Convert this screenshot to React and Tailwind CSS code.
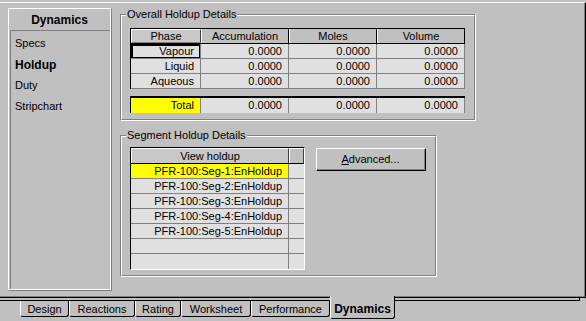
const BG = "bg-[#c0c0c0]";

function GroupBox({ label, className, children }) {
  return (
    <div className={`relative border-t border-l border-t-[#808080] border-l-[#808080] border-r border-b border-r-white border-b-white ${className}`}>
      <div className="h-full border-t border-l border-t-white border-l-white border-r border-b border-r-[#808080] border-b-[#808080]">
        {children}
      </div>
      <div className="absolute -top-[7px] left-[5px] px-[1px] bg-[#c0c0c0] leading-[13px]">{label}</div>
    </div>
  );
}

function Cell({ w, children, className = "" }) {
  return (
    <div className={`h-full flex items-center justify-end pr-[6px] border-r border-r-[#808080] bg-[#e0e0e0] ${w} ${className}`}>
      {children}
    </div>
  );
}

const phases = ["Vapour", "Liquid", "Aqueous"];
const segs = [1, 2, 3, 4, 5];

export default function App() {
  return (
    <div className={`w-[586px] h-[321px] ${BG} font-['Liberation_Sans',Arial,sans-serif] text-[11px] text-black overflow-hidden leading-none`}>
      <div className="pt-[2px]">
        <div className="h-[296px] border-t border-t-white border-r border-b border-r-black border-b-black">
          <div className="h-full border-r border-b border-r-[#808080] border-b-[#808080] flex items-start">
            {/* Left nav */}
            <div className="ml-[8px] mt-[5px] w-[104px] h-[283px] border-t border-l border-t-white border-l-white border-r border-b border-r-[#808080] border-b-[#808080]">
              <div className="h-full flex flex-col border-r border-b border-r-white border-b-white">
                <div className="h-[21px] flex items-center justify-center font-bold text-[12px]">Dynamics</div>
                <div className="flex-1 ml-[1px] border-t border-l border-t-[#808080] border-l-[#808080] pt-[2px] pl-[4px]">
                  <div className="h-[21px] flex items-center">Specs</div>
                  <div className="h-[21px] flex items-center font-bold text-[12px]">Holdup</div>
                  <div className="h-[21px] flex items-center">Duty</div>
                  <div className="h-[21px] flex items-center">Stripchart</div>
                </div>
              </div>
            </div>

            {/* Right content */}
            <div className="ml-[8px] mt-[11px] flex flex-col">
              <GroupBox label="Overall Holdup Details" className="w-[356px] h-[107px]">
                <div className="pt-[12px] pl-[8px]">
                  <div className="w-[335px] border-t border-l border-black">
                    <div className="h-[15px] flex border-b border-b-black">
                      <div className="w-[70px] h-full flex items-center justify-center border-t border-l border-white border-r border-b border-r-[#404040] border-b-[#808080] bg-[#c8c8c8]">Phase</div>
                      <div className="w-[88px] h-full flex items-center justify-center border-l border-l-white border-r border-r-black">Accumulation</div>
                      <div className="w-[88px] h-full flex items-center justify-center border-l border-l-white border-r border-r-black">Moles</div>
                      <div className="w-[88px] h-full flex items-center justify-center border-l border-l-white border-r border-r-black">Volume</div>
                    </div>
                    {phases.map((p, i) => (
                      <div key={p} className="h-[15px] flex border-b border-b-[#808080]">
                        <Cell w="w-[70px]" className={i === 0 ? "shadow-[inset_0_0_0_1px_#000,inset_1px_1px_0_1px_#000]" : ""}>{p}</Cell>
                        <Cell w="w-[88px]">0.0000</Cell>
                        <Cell w="w-[88px]">0.0000</Cell>
                        <Cell w="w-[88px]">0.0000</Cell>
                      </div>
                    ))}
                  </div>
                  <div className="mt-[7px] w-[335px] h-[17px] flex border-t-2 border-t-black border-l border-l-black">
                    <Cell w="w-[70px]" className="bg-[#ffff00]">Total</Cell>
                    <Cell w="w-[88px]">0.0000</Cell>
                    <Cell w="w-[88px]">0.0000</Cell>
                    <Cell w="w-[88px]">0.0000</Cell>
                  </div>
                </div>
              </GroupBox>

              <GroupBox label="Segment Holdup Details" className="mt-[14px] w-[317px] h-[142px]">
                <div className="pt-[10px] pl-[8px] flex items-start">
                  <div className="w-[175px] border-t border-l border-t-black border-l-black border-r border-b border-r-white border-b-white">
                    <div className="h-[16px] flex border-b border-b-black">
                      <div className="w-[158px] h-full flex items-center justify-center border-t border-l border-white border-r border-r-[#404040] bg-[#c8c8c8]">View holdup</div>
                      <div className="flex-1 h-full border-t border-l border-white border-r border-r-[#404040]"></div>
                    </div>
                    {[...segs, null, null].map((s, i) => (
                      <div key={i} className={`h-[15px] flex ${i < 6 ? "border-b border-b-[#808080]" : ""}`}>
                        <div className={`w-[158px] h-full flex items-center justify-end pr-[6px] border-r border-r-[#808080] ${i === 0 ? "bg-[#ffff00]" : "bg-[#e0e0e0]"}`}>
                          {s ? `PFR-100:Seg-${s}:EnHoldup` : ""}
                        </div>
                        <div className="flex-1 h-full bg-[#e0e0e0]"></div>
                      </div>
                    ))}
                  </div>
                  <button className="ml-[11px] mt-[1px] w-[110px] h-[23px] border-t border-l border-t-white border-l-white border-r border-b border-r-black border-b-black bg-[#c0c0c0]">
                    <div className="h-full flex items-center justify-center border-r border-b border-r-[#808080] border-b-[#808080]">
                      <span><span className="underline">A</span>dvanced...</span>
                    </div>
                  </button>
                </div>
              </GroupBox>
            </div>
          </div>
        </div>
      </div>

      {/* Tab strip */}
      <div className="w-[580px] h-[3px] border-r border-b border-r-black border-b-black"></div>
      <div className="flex items-start pl-[20px]">
        {[
          ["Design", "w-[49px]"],
          ["Reactions", "w-[66px]"],
          ["Rating", "w-[46px]"],
          ["Worksheet", "w-[70px]"],
          ["Performance", "w-[79px]"],
        ].map(([t, w]) => (
          <div key={t} className={`${w} h-[16px] flex items-center justify-center pt-[1px] border-l border-l-white border-r border-r-black border-b border-b-black rounded-b-[3px]`}>
            {t}
          </div>
        ))}
        <div className={`relative -mt-[5px] w-[65px] h-[23px] ${BG} flex items-center justify-center pt-[4px] font-bold text-[12px] border-l border-l-white border-r border-r-black border-b border-b-black rounded-b-[3px]`}>
          Dynamics
        </div>
      </div>
    </div>
  );
}
